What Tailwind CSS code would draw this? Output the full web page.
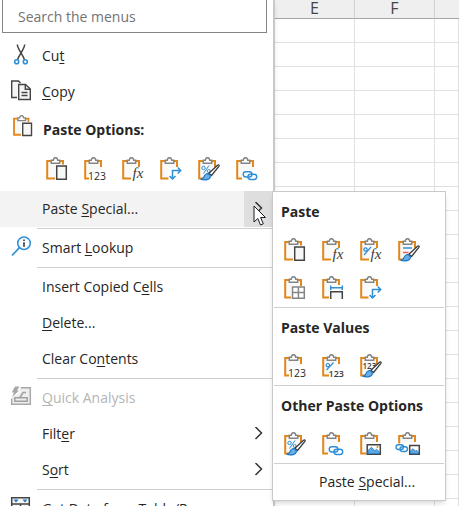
<!DOCTYPE html>
<html lang="en">
<head>
<meta charset="utf-8">
<title>Cell context menu</title>
<script src="https://cdn.jsdelivr.net/npm/@tailwindcss/browser@4"></script>
</head>
<body class="h-screen overflow-hidden bg-white font-['Open_Sans','Noto_Sans',sans-serif] text-[14px] leading-5 text-[#262626]">

<!-- Shared icon parts -->
<svg class="hidden" aria-hidden="true">
  <symbol id="board" viewBox="0 0 24 24">
    <path d="M2.2 4H18V21.5H2.2z" fill="#f9f9f9"/>
    <path d="M6 4H2.2v17.5H10M14.500 4H18v6" fill="none" stroke="#e3871b" stroke-width="2"/>
    <path d="M6.300 6.200V3.200H8.300C8.600 -.2 12.400 -.2 12.700 3.200H14.700V6.200z" fill="#fff" stroke="#858585" stroke-width="1.500"/>
  </symbol>
  <symbol id="brush" viewBox="0 0 24 24">
    <path d="M20.500 8.200c1-.9 2.200.1 1.400 1.200L14.500 18.500l-2.600-2.300z" fill="#fff" stroke="#3b3b3b" stroke-width="1.300"/>
    <path d="M3.500 22.300c2.800-.2 3.300-1.600 3.900-3.400.8-2.300 3.300-3 5-1.400 1.700 1.700.9 4.200-1.600 4.900-2.300.7-5.200.6-7.300-.1z" fill="#69aee6" stroke="#1976c4" stroke-width="1.200"/>
  </symbol>
  <symbol id="link" viewBox="0 0 24 24">
    <rect x="8.200" y="14.700" width="8.800" height="5.300" rx="2.650" fill="none" stroke="#2f8fd6" stroke-width="1.400"/>
    <rect x="12.900" y="17.200" width="8.800" height="5.300" rx="2.650" fill="none" stroke="#2f8fd6" stroke-width="1.400"/>
  </symbol>
  <symbol id="picture" viewBox="0 0 24 24">
    <path d="M8.200 12.700H21.300V22.300H8.200z" fill="#fff" stroke="#444" stroke-width="1.500"/>
    <path d="M9 21.600v-3l3.500-3.300 3.300 3.500 1.700-1.500 3 2.800v1.500z" fill="#5ba8e2" stroke="#1b76c2" stroke-width=".8"/>
    <circle cx="18.500" cy="15" r="1" fill="#e3871b"/>
  </symbol>

  <symbol id="paste" viewBox="0 0 24 24">
    <use href="#board"/>
    <path d="M10 7.500H22.500V23.500H10z" fill="#fff"/>
    <path d="M11.700 9H21.300V22.300H11.700z" fill="#f7f7f7" stroke="#444" stroke-width="1.500"/>
  </symbol>
  <symbol id="values" viewBox="0 0 24 24">
    <use href="#board"/>
    <path d="M6 13H23V24H6z" fill="#fff"/>
    <text x="5" y="23" font-family="Open Sans" font-size="10.500" fill="#2b2b2b">123</text>
  </symbol>
  <symbol id="formulas" viewBox="0 0 24 24">
    <use href="#board"/>
    <path d="M11 10H23V24H11z" fill="#fff"/>
    <text x="11.500" y="21" font-family="Liberation Serif" font-style="italic" font-size="15" fill="#3b3b3b">fx</text>
  </symbol>
  <symbol id="formulas-number" viewBox="0 0 24 24">
    <use href="#board"/>
    <path d="M11 10H23V24H11z" fill="#fff"/>
    <path d="M5 17L12 9" stroke="#2f8fd6" stroke-width="1.200"/>
    <circle cx="6.500" cy="11.500" r="1.700" fill="none" stroke="#2f8fd6" stroke-width="1.300"/>
    <text x="11.500" y="21" font-family="Liberation Serif" font-style="italic" font-size="15" fill="#3b3b3b">fx</text>
  </symbol>
  <symbol id="transpose" viewBox="0 0 24 24">
    <use href="#board"/>
    <path d="M9.500 11H23V24H9.500z" fill="#fff"/>
    <path d="M13.500 22V13.500H21.500M10.500 19l3 3 3-3M18.700 10.500l3 3-3 3" fill="none" stroke="#2f8fd6" stroke-width="1.500"/>
  </symbol>
  <symbol id="formatting" viewBox="0 0 24 24">
    <use href="#board"/>
    <circle cx="6.500" cy="11" r="1.700" fill="none" stroke="#2f8fd6" stroke-width="1"/>
    <circle cx="11.700" cy="14" r="1.500" fill="none" stroke="#2f8fd6" stroke-width="1"/>
    <path d="M6.500 16.500L12 8.500" stroke="#2f8fd6" stroke-width="1"/>
    <use href="#brush"/>
  </symbol>
  <symbol id="paste-link" viewBox="0 0 24 24">
    <use href="#board"/>
    <path d="M7 13.500H23V24H7z" fill="#fff"/>
    <use href="#link"/>
  </symbol>
  <symbol id="source" viewBox="0 0 24 24">
    <use href="#board"/>
    <path d="M6 10H15" stroke="#2f8fd6" stroke-width="1.500"/>
    <path d="M6 14.500H11.500" stroke="#ee5c5c" stroke-width="1.500"/>
    <use href="#brush"/>
  </symbol>
  <symbol id="no-borders" viewBox="0 0 24 24">
    <use href="#board"/>
    <path d="M8 10H22.500V24H8z" fill="#fff"/>
    <path d="M9.500 11H21.300V22.300H9.500zM15.400 11V22.300M9.500 16.600H21.300" fill="none" stroke="#858585" stroke-width="1.500"/>
  </symbol>
  <symbol id="widths" viewBox="0 0 24 24">
    <use href="#board"/>
    <path d="M8 9H23V24H8z" fill="#fff"/>
    <path d="M9.700 9.500V14M21.300 9.500V14M9.700 11.700H21.300" stroke="#2f8fd6" stroke-width="1.500"/>
    <path d="M9.700 23V15.700H21.300V23" fill="#f7f7f7" stroke="#444" stroke-width="1.500"/>
  </symbol>
  <symbol id="values-number" viewBox="0 0 24 24">
    <use href="#board"/>
    <path d="M8 14.500H23V24H8z" fill="#fff"/>
    <path d="M5.500 16L12.500 8.500" stroke="#2f8fd6" stroke-width="1.200"/>
    <circle cx="6.800" cy="11.200" r="1.700" fill="none" stroke="#2f8fd6" stroke-width="1.200"/>
    <text x="7.500" y="23" font-family="Open Sans" font-size="9" font-weight="600" fill="#3b3b3b">123</text>
  </symbol>
  <symbol id="values-source" viewBox="0 0 24 24">
    <use href="#board"/>
    <text x="3.500" y="14.500" font-family="Open Sans" font-size="8" font-weight="600" fill="#3b3b3b">123</text>
    <use href="#brush"/>
  </symbol>
  <symbol id="paste-picture" viewBox="0 0 24 24">
    <use href="#board"/>
    <path d="M7 11.500H22V24H7z" fill="#fff"/>
    <use href="#picture"/>
  </symbol>
  <symbol id="chevron" viewBox="0 0 10 14">
    <path d="M1.500 0l6 6-6 6" fill="none" stroke="#333" stroke-width="1.500"/>
  </symbol>
</svg>

<div class="flex h-full">
  <!-- Context menu -->
  <nav aria-label="Cell menu" class="relative z-10 w-[275px] shrink-0 border-r-2 border-[#c9c9c9] bg-white shadow-md">
    <div class="h-[38px] pl-[2px] pr-[6px]">
      <input type="search" aria-label="Search the menus" placeholder="Search the menus" class="block h-[33px] w-full border border-t-0 border-[#858585] bg-white px-[15px] outline-none placeholder:text-[#737373]">
    </div>

    <button class="flex h-9 w-full items-center text-left">
      <span class="w-[42px] pl-[10px]">
        <svg class="size-6" viewBox="0 0 24 24" fill="none" aria-hidden="true">
          <path d="M7.300 .5C7.500 5 13 11 14.600 16M14.700 .5C14.500 5 9 11 7.400 16" stroke="#444" stroke-width="1.500"/>
          <circle cx="6.700" cy="17.800" r="2" stroke="#2f8fd6" stroke-width="1.600"/>
          <circle cx="15.300" cy="17.800" r="2" stroke="#2f8fd6" stroke-width="1.600"/>
        </svg>
      </span>
      <span>Cu<u class="underline-offset-2">t</u></span>
    </button>
    <button class="flex h-9 w-full items-center text-left">
      <span class="w-[42px] pl-[10px]">
        <svg class="size-6" viewBox="0 0 24 24" fill="#f5f5f5" stroke="#444" stroke-width="1.400" aria-hidden="true">
          <path d="M7 17.500H1.700V1H8.500L10.500 3"/>
          <path d="M8.700 4.500H15.500L20.300 9V19.500H8.700z"/>
          <path d="M15.300 4.500V9.300H20.300M11.500 12.500H17.500M11.500 15.500H17.500" fill="none"/>
        </svg>
      </span>
      <span><u class="underline-offset-2">C</u>opy</span>
    </button>

    <div class="flex h-10 items-center">
      <span class="w-[43px] pb-2 pl-3"><svg class="size-[22px]" aria-hidden="true"><use href="#paste"/></svg></span>
      <h2 class="font-bold">Paste Options:</h2>
    </div>
    <div class="flex h-[41px] pb-[3px] pl-[38px]">
      <button aria-label="Paste" class="w-[38px] p-[7px]"><svg class="size-6"><use href="#paste"/></svg></button>
      <button aria-label="Values" class="w-[38px] p-[7px]"><svg class="size-6"><use href="#values"/></svg></button>
      <button aria-label="Formulas" class="w-[38px] p-[7px]"><svg class="size-6"><use href="#formulas"/></svg></button>
      <button aria-label="Transpose" class="w-[38px] p-[7px]"><svg class="size-6"><use href="#transpose"/></svg></button>
      <button aria-label="Formatting" class="w-[38px] p-[7px]"><svg class="size-6"><use href="#formatting"/></svg></button>
      <button aria-label="Paste Link" class="w-[38px] p-[7px]"><svg class="size-6"><use href="#paste-link"/></svg></button>
    </div>

    <div class="relative">
      <button aria-haspopup="menu" aria-expanded="true" class="flex h-9 w-full items-center justify-between bg-[#f3f3f3] pl-[42px] text-left">
        <span>Paste <u class="underline-offset-2">S</u>pecial...</span>
        <span class="flex h-full w-[29px] items-center bg-[#dedede] pl-[10px]"><svg class="h-[14px] w-[10px]"><use href="#chevron"/></svg></span>
      </button>

      <!-- Paste Special submenu -->
      <section aria-label="Paste Special" class="absolute left-full top-0 z-20 -ml-px w-[174px] border border-[#c9c9c9] bg-white shadow-md">
        <h3 class="flex h-[39px] items-center px-2 font-bold">Paste</h3>
        <div class="flex flex-wrap px-[3px]">
          <button aria-label="Paste" class="w-[38px] p-[7px]"><svg class="size-6"><use href="#paste"/></svg></button>
          <button aria-label="Formulas" class="w-[38px] p-[7px]"><svg class="size-6"><use href="#formulas"/></svg></button>
          <button aria-label="Formulas and Number Formatting" class="w-[38px] p-[7px]"><svg class="size-6"><use href="#formulas-number"/></svg></button>
          <button aria-label="Keep Source Formatting" class="w-[38px] p-[7px]"><svg class="size-6"><use href="#source"/></svg></button>
          <button aria-label="No Borders" class="w-[38px] p-[7px]"><svg class="size-6"><use href="#no-borders"/></svg></button>
          <button aria-label="Keep Source Column Widths" class="w-[38px] p-[7px]"><svg class="size-6"><use href="#widths"/></svg></button>
          <button aria-label="Transpose" class="w-[38px] p-[7px]"><svg class="size-6"><use href="#transpose"/></svg></button>
        </div>
        <hr class="mx-px border-[#cfcfcf]">
        <h3 class="flex h-[39px] items-center px-2 font-bold">Paste Values</h3>
        <div class="flex px-[3px]">
          <button aria-label="Values" class="w-[38px] p-[7px]"><svg class="size-6"><use href="#values"/></svg></button>
          <button aria-label="Values and Number Formatting" class="w-[38px] p-[7px]"><svg class="size-6"><use href="#values-number"/></svg></button>
          <button aria-label="Values and Source Formatting" class="w-[38px] p-[7px]"><svg class="size-6"><use href="#values-source"/></svg></button>
        </div>
        <hr class="mx-px border-[#cfcfcf]">
        <h3 class="flex h-[39px] items-center px-2 font-bold">Other Paste Options</h3>
        <div class="flex px-[3px]">
          <button aria-label="Formatting" class="w-[38px] p-[7px]"><svg class="size-6"><use href="#formatting"/></svg></button>
          <button aria-label="Paste Link" class="w-[38px] p-[7px]"><svg class="size-6"><use href="#paste-link"/></svg></button>
          <button aria-label="Picture" class="w-[38px] p-[7px]"><svg class="size-6"><use href="#paste-picture"/></svg></button>
          <button aria-label="Linked Picture" class="w-[38px] p-[7px]">
            <svg class="size-6 overflow-visible" viewBox="0 0 24 24">
              <use href="#board"/>
              <path d="M-2 11.500H23V24H-2z" fill="#fff"/>
              <rect x="-1" y="12.700" width="7.500" height="4.800" rx="2.400" fill="none" stroke="#2f8fd6" stroke-width="1.400"/>
              <rect x="3" y="14.700" width="7.500" height="4.800" rx="2.400" fill="none" stroke="#2f8fd6" stroke-width="1.400"/>
              <path d="M12.700 13.500H22.300V22.300H12.700z" fill="#fff" stroke="#444" stroke-width="1.500"/>
              <path d="M13.500 21.600v-2.500l2.500-2.400 2.500 2.500 1-1 2 1.800v1.600z" fill="#5ba8e2" stroke="#1b76c2" stroke-width=".8"/>
            </svg>
          </button>
        </div>
        <hr class="mx-px border-[#cfcfcf]">
        <button class="flex h-9 w-full items-center pl-[46px] text-left"><span>Paste <u class="underline-offset-2">S</u>pecial...</span></button>
      </section>

      <!-- Mouse pointer -->
      <svg class="pointer-events-none absolute right-[6px] top-[14px] z-30 h-[22px] w-[14px]" viewBox="0 0 14 22" aria-hidden="true">
        <path d="M1 1V17L4.800 13.500 7.500 20 10.300 18.800 7.600 12.500H12.500z" fill="#fff" stroke="#1c1c28" stroke-width="1"/>
      </svg>
    </div>

    <hr class="my-px ml-[37px] border-[#cfcfcf]">
    <button class="flex h-9 w-full items-center text-left">
      <span class="w-[42px] pl-[10px]">
        <svg class="size-6" viewBox="0 0 24 24" fill="none" aria-hidden="true">
          <circle cx="14" cy="7.200" r="6.300" fill="#f9fcff" stroke="#2f8fd6" stroke-width="1.500"/>
          <path d="M9.500 11.700L2 19.500" stroke="#2f8fd6" stroke-width="1.700"/>
          <path d="M14 6.300V10.800M14 3.600V5.100" stroke="#444" stroke-width="1.700"/>
        </svg>
      </span>
      <span>Smart <u class="underline-offset-2">L</u>ookup</span>
    </button>
    <hr class="my-px ml-[37px] border-[#cfcfcf]">
    <button class="flex h-9 w-full items-center pl-[42px] text-left"><span>Insert Copied C<u class="underline-offset-2">e</u>lls</span></button>
    <button class="flex h-9 w-full items-center pl-[42px] text-left"><span><u class="underline-offset-2">D</u>elete...</span></button>
    <button class="flex h-9 w-full items-center pl-[42px] text-left"><span>Clear Co<u class="underline-offset-2">n</u>tents</span></button>
    <hr class="my-px ml-[37px] border-[#cfcfcf]">
    <button disabled class="flex h-9 w-full items-center text-left text-[#b5b5b5]">
      <span class="w-[42px] pl-[10px]">
        <svg class="size-6" viewBox="0 0 24 24" fill="none" aria-hidden="true">
          <path d="M1.700 1.800H20.300V18.300H1.700z" fill="#eee" stroke="#a8a8a8" stroke-width="1.500"/>
          <path d="M0 0H11.500L9 5.500H11L1 13H0z" fill="#fff"/>
          <path d="M4.800 15.300V11.800H17.200V15.300zM10 11.500L13 6.500H16" fill="none" stroke="#a0a0a0" stroke-width="1.500"/>
          <path d="M5 .5H9.500L7 4.500H9L2 11.500 4 6.500H1.700z" fill="#a8a8a8"/>
        </svg>
      </span>
      <span><u class="underline-offset-2">Q</u>uick Analysis</span>
    </button>
    <button class="flex h-9 w-full items-center justify-between pl-[42px] pr-[9px] text-left"><span>Filt<u class="underline-offset-2">e</u>r</span><svg class="h-[14px] w-[10px]"><use href="#chevron"/></svg></button>
    <button class="flex h-9 w-full items-center justify-between pl-[42px] pr-[9px] text-left"><span>S<u class="underline-offset-2">o</u>rt</span><svg class="h-[14px] w-[10px]"><use href="#chevron"/></svg></button>
    <hr class="my-px ml-[37px] border-[#cfcfcf]">
    <button class="flex h-9 w-full items-center text-left">
      <span class="w-[42px] pl-[10px]">
        <svg class="size-6" viewBox="0 1 24 24" fill="none" aria-hidden="true">
          <path d="M1.700 13V20H19.300V13M10.500 13V20" stroke="#444" stroke-width="1.500"/>
          <path d="M1.700 1.700H19.300V13H1.700zM1.700 8H19.300M10.500 8V13" fill="#f5f5f5" stroke="#444" stroke-width="1.500"/>
          <path d="M3.500 3.500H8.500L6 6.500zM12.500 3.500H17.500L15 6.500z" fill="#1b76c2"/>
        </svg>
      </span>
      <span><u class="underline-offset-2">G</u>et Data from Table/Range...</span>
    </button>
  </nav>

  <!-- Worksheet cells -->
  <div class="min-w-0 flex-1 overflow-hidden">
    <table class="w-full table-fixed border-separate border-spacing-0">
      <colgroup><col class="w-20"><col class="w-20"><col></colgroup>
      <thead>
        <tr class="h-[19px] bg-[#efefef] text-[#444]">
          <th class="h-[19px] border-b border-r border-b-[#a6a6a6] border-r-[#d0d0d0] p-0 pb-[2px] text-[16px] leading-4 font-normal">E</th>
          <th class="h-[19px] border-b border-r border-b-[#a6a6a6] border-r-[#d0d0d0] p-0 pb-[2px] text-[16px] leading-4 font-normal">F</th>
          <th class="h-[19px] border-b border-b-[#a6a6a6] p-0"></th>
        </tr>
      </thead>
      <tbody id="cells"></tbody>
    </table>
  </div>
</div>

<script>
  const cell = '<td class="h-6 border-b border-r border-[#e0e0e0] p-0"></td>';
  document.getElementById('cells').innerHTML = ('<tr>' + cell.repeat(3) + '</tr>').repeat(21);
</script>
</body>
</html>
